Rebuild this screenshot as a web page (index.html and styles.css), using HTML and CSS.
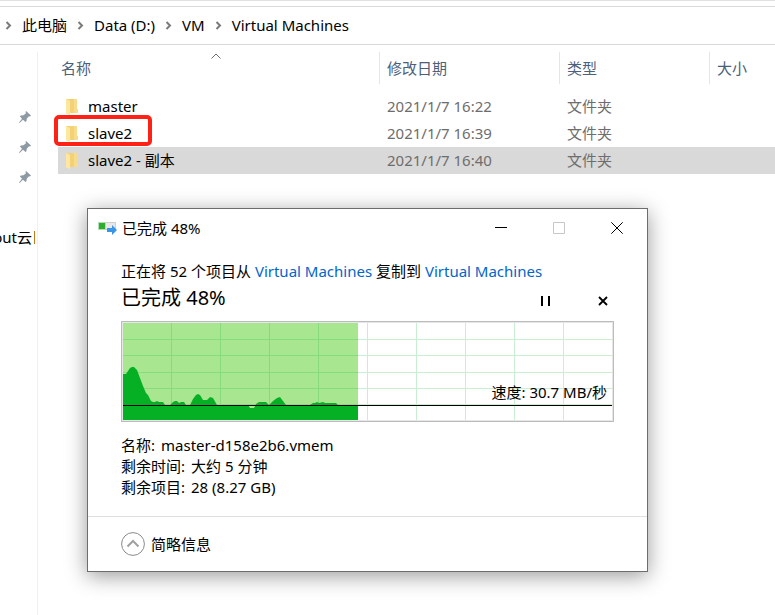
FILE: index.html
```html
<!DOCTYPE html>
<html lang="zh-CN">
<head>
<meta charset="utf-8">
<title>Virtual Machines</title>
<link rel="stylesheet" href="styles.css">
</head>
<body>
<div class="explorer">
  <div class="toolbar-edge"></div>
  <nav class="address">
    <svg class="chev" viewBox="0 0 7 9"><path d="M1.5 1 5 4.5 1.5 8"/></svg>
    <a href="#">此电脑</a>
    <svg class="chev" viewBox="0 0 7 9"><path d="M1.5 1 5 4.5 1.5 8"/></svg>
    <a href="#">Data (D:)</a>
    <svg class="chev" viewBox="0 0 7 9"><path d="M1.5 1 5 4.5 1.5 8"/></svg>
    <a href="#">VM</a>
    <svg class="chev" viewBox="0 0 7 9"><path d="M1.5 1 5 4.5 1.5 8"/></svg>
    <a href="#">Virtual Machines</a>
  </nav>
  <div class="content">
    <aside class="sidebar">
      <svg class="pin" viewBox="0 0 14 14"><path d="M8 1 13 5.500 12 6.500 11 6.300 8.700 8.700 8.500 11 7.500 12 5 9.700 1.500 13 1 12.500 4 8.700 1.800 6.300 3 5.500 5.500 5.300 8 3.300 7.500 2Z"/></svg>
      <svg class="pin" viewBox="0 0 14 14"><path d="M8 1 13 5.500 12 6.500 11 6.300 8.700 8.700 8.500 11 7.500 12 5 9.700 1.500 13 1 12.500 4 8.700 1.800 6.300 3 5.500 5.500 5.300 8 3.300 7.500 2Z"/></svg>
      <svg class="pin" viewBox="0 0 14 14"><path d="M8 1 13 5.500 12 6.500 11 6.300 8.700 8.700 8.500 11 7.500 12 5 9.700 1.500 13 1 12.500 4 8.700 1.800 6.300 3 5.500 5.500 5.300 8 3.300 7.500 2Z"/></svg>
      <div class="tree-item"><span>out云</span><i class="cut"></i></div>
    </aside>
    <main class="files">
      <table>
        <colgroup><col class="c-name"><col class="c-date"><col class="c-type"><col></colgroup>
        <thead>
          <tr>
            <th>名称<svg class="sort" viewBox="0 0 10 6"><path d="M.5 5.500 5 1 9.500 5.500"/></svg></th>
            <th>修改日期</th><th>类型</th><th>大小</th>
          </tr>
        </thead>
        <tbody>
          <tr>
            <td><div class="name"><svg class="folder" viewBox="0 0 14 18"><path d="M1 1H12V11H13V15H1Z" fill="#f3d277"/><path d="M9 1H12V11H13V15H9Z" fill="#f8dc8b"/><path d="M1 1 5 3V17L1 15.500Z" fill="#ffe7a2"/></svg>master</div></td>
            <td>2021/1/7 16:22</td><td>文件夹</td><td></td>
          </tr>
          <tr>
            <td class="marked"><div class="name"><svg class="folder" viewBox="0 0 14 18"><path d="M1 1H12V11H13V15H1Z" fill="#f3d277"/><path d="M9 1H12V11H13V15H9Z" fill="#f8dc8b"/><path d="M1 1 5 3V17L1 15.500Z" fill="#ffe7a2"/></svg>slave2</div></td>
            <td>2021/1/7 16:39</td><td>文件夹</td><td></td>
          </tr>
          <tr class="selected">
            <td><div class="name"><svg class="folder" viewBox="0 0 14 18"><path d="M1 1H12V11H13V15H1Z" fill="#f3d277"/><path d="M9 1H12V11H13V15H9Z" fill="#f8dc8b"/><path d="M1 1 5 3V17L1 15.500Z" fill="#ffe7a2"/></svg>slave2 - 副本</div></td>
            <td>2021/1/7 16:40</td><td>文件夹</td><td></td>
          </tr>
        </tbody>
      </table>
    </main>
  </div>
</div>

<section class="dialog" role="dialog" aria-labelledby="dlg-title">
  <header class="titlebar">
    <svg class="copy-icon" viewBox="0 0 19 14"><path d="M0 1H18V9H0Z" fill="#cfcfcf"/><path d="M1 2H17V8H1Z" fill="#e8e8e8"/><path d="M0 1H8V9H0Z" fill="#b5dcb5"/><path d="M1 2H7V8H1Z" fill="#2cae2c"/><path d="M9 7H14V4L19 9 14 14V11H9Z" fill="#3a96e4"/></svg>
    <h1 id="dlg-title">已完成 48%</h1>
    <div class="win-buttons">
      <button type="button" aria-label="最小化"><svg viewBox="0 0 12 12"><path d="M0 5.500H12" stroke="#000"/></svg></button>
      <button type="button" aria-label="最大化" disabled><svg viewBox="0 0 12 12"><path d="M.5 .5H11.500V11.500H.5Z" stroke="#c6c6c6"/></svg></button>
      <button type="button" aria-label="关闭"><svg viewBox="0 0 12 12"><path d="M.3 .3 11.700 11.700M11.700 .3 .3 11.700" stroke="#000"/></svg></button>
    </div>
  </header>
  <div class="body">
    <p class="route">正在将 52 个项目从 <a href="#">Virtual Machines</a> 复制到 <a href="#">Virtual Machines</a></p>
    <div class="status">
      <h2>已完成 48%</h2>
      <div class="actions">
        <button type="button" aria-label="暂停"><svg viewBox="0 0 10 10"><path d="M2 0V10M9 0V10" stroke="#000" stroke-width="2"/></svg></button>
        <button type="button" aria-label="取消"><svg viewBox="0 0 10 10"><path d="M1 1 9 9M9 1 1 9" stroke="#000" stroke-width="1.800"/></svg></button>
      </div>
    </div>
    <div class="chart">
      <svg class="plot" viewBox="0 0 489 97" preserveAspectRatio="none">
        <path d="M0 0H235V97H0Z" fill="#a8e690"/>
        <path d="M244.500 0V97M293.500 0V97M342.500 0V97M391.500 0V97M440.500 0V97M235 16.500H489M235 32.500H489M235 49.500H489M235 65.500H489M235 81.500H489" stroke="#c9efd2"/>
        <path d="M48.500 0V97M97.500 0V97M146.500 0V97M195.500 0V97M0 16.500H235M0 32.500H235M0 49.500H235M0 65.500H235M0 81.500H235" stroke="#88db7c"/>
        <path d="M0 51H3L5 48 7 45 9 44H11L14 47 17 55 20 63 23 70 25 72 28 78 30 79H32L34 78 36 79H40L42 82H47L50 79 52 78H54L56 80 58 79H61L63 82H67L70 76 73 72 75 71 77 72 80 77H84L87 74 90 75 94 82H125L127 85H131L133 81 136 79H143L146 82 150 78 154 75 157 74 160 78 163 82H187L190 80 192 80 194 79 196 80 200 79 202 80H213L215 82H235V97H0Z" fill="#06b025"/>
        <path d="M0 82.500H489" stroke="#000"/>
      </svg>
      <span class="speed">速度: 30.7 MB/秒</span>
    </div>
    <dl class="details">
      <div><dt>名称:</dt><dd>master-d158e2b6.vmem</dd></div>
      <div><dt>剩余时间:</dt><dd>大约 5 分钟</dd></div>
      <div><dt>剩余项目:</dt><dd>28 (8.27 GB)</dd></div>
    </dl>
  </div>
  <footer class="footer">
    <button type="button" class="less"><svg viewBox="0 0 24 24"><circle cx="12" cy="12" r="11.400" stroke="#8a8a8a"/><path d="M6.500 14.500 12 9 17.500 14.500" stroke="#a0a0a0" stroke-width="2"/></svg>简略信息</button>
  </footer>
</section>
</body>
</html>
```
FILE: styles.css
```css
*,
*::before,
*::after {
  box-sizing: border-box;
}

body {
  margin: 0;
  background: #fff;
  color: #000;
  font: 15px/21px "Noto Sans", "Noto Sans CJK SC", sans-serif;
  overflow: hidden;
}

svg {
  display: block;
  fill: none;
}

h1, h2, p, dl, dd {
  margin: 0;
  font-weight: 400;
}

a {
  color: inherit;
  text-decoration: none;
}

button {
  display: flex;
  align-items: center;
  justify-content: center;
  padding: 0;
  border: 0;
  background: none;
  color: inherit;
  font: inherit;
}

/* explorer window */
.explorer {
  display: flex;
  flex-direction: column;
  min-height: 100vh;
}

.toolbar-edge {
  height: 7px;
  border-top: 1px solid #e0e0e0;
  border-bottom: 1px solid #d9d9d9;
}

.address {
  display: flex;
  align-items: center;
  gap: 10px;
  height: 38px;
  padding-left: 5px;
  border-bottom: 1px solid #d9d9d9;
  white-space: nowrap;
}

.chev {
  width: 7px;
  height: 9px;
  stroke: #7a7a7a;
  stroke-width: 2;
}

.content {
  display: flex;
  flex: 1;
  padding-top: 7px;
}

.sidebar {
  width: 38px;
  padding-top: 58px;
  border-right: 1px solid #f0f0f0;
  overflow: hidden;
}

.pin {
  width: 14px;
  height: 14px;
  margin: 0 0 16px 18px;
  fill: #8d99a3;
}

.tree-item {
  display: flex;
  align-items: center;
  justify-content: flex-end;
  gap: 2px;
  margin-top: 43px;
  padding-right: 2px;
  white-space: nowrap;
}

.cut {
  flex: none;
  width: 1px;
  height: 13px;
  background: #c47a1c;
}

.files {
  flex: 1;
  min-width: 0;
  padding-left: 20px;
}

table {
  width: 100%;
  table-layout: fixed;
  border-collapse: separate;
  border-spacing: 0;
}

.c-name {
  width: 321px;
}

.c-date {
  width: 180px;
}

.c-type {
  width: 150px;
}

th, td {
  padding: 0 0 0 8px;
  text-align: left;
  white-space: nowrap;
  color: #6d6d6d;
}

th {
  position: relative;
  height: 32px;
  color: #4c607a;
  font-weight: 400;
}

th + th {
  padding-left: 7px;
  border-left: 1px solid #e5e5e5;
}

th:first-child {
  padding-left: 3px;
}

.sort {
  position: absolute;
  top: 1px;
  right: 158px;
  width: 10px;
  height: 6px;
  stroke: #6d6d6d;
}

tbody::before {
  content: "";
  display: block;
  height: 9px;
}

td {
  position: relative;
  height: 27px;
}

.selected td {
  background: #d9d9d9;
}

.name {
  display: flex;
  align-items: center;
  gap: 9px;
  color: #000;
}

td:first-child {
  padding-left: 7px;
}

.folder {
  width: 14px;
  height: 18px;
}

.marked::after {
  content: "";
  position: absolute;
  z-index: 1;
  top: -5px;
  left: -4px;
  width: 98px;
  height: 31px;
  border: 4px solid #fe2116;
  border-radius: 5px;
}

/* copy progress window */
.dialog {
  position: absolute;
  top: 208px;
  left: 87px;
  width: 561px;
  border: 1px solid #6d6d6d;
  background: #fff;
  box-shadow: 0 4px 20px rgba(0, 0, 0, .4);
}

.titlebar {
  display: flex;
  align-items: center;
  height: 38px;
  padding: 0 1px 0 10px;
}

.copy-icon {
  width: 19px;
  height: 14px;
}

h1 {
  margin-left: 5px;
  font-size: 15px;
}

.win-buttons {
  display: flex;
  margin-left: auto;
}

.win-buttons button {
  width: 58px;
  height: 36px;
}

.win-buttons svg {
  width: 12px;
  height: 12px;
}

.body {
  padding: 14px 33px 18px;
}

.route a {
  color: #0066cc;
}

.status {
  display: flex;
  align-items: center;
  justify-content: space-between;
  height: 28px;
  margin-top: 2px;
}

h2 {
  font-size: 20px;
  line-height: 28px;
}

.actions {
  display: flex;
  gap: 36px;
  padding-top: 6px;
}

.actions button {
  width: 22px;
  height: 22px;
}

.actions svg {
  width: 10px;
  height: 10px;
}

.chart {
  position: relative;
  height: 101px;
  margin-top: 9px;
  border: 1px solid #bcbcbc;
  outline: 1px solid #e6e6e6;
  outline-offset: -2px;
  padding: 1px;
}

.plot {
  width: 100%;
  height: 97px;
}

.speed {
  position: absolute;
  right: 6px;
  bottom: 18px;
}

.details {
  margin-top: 13px;
}

.details div {
  display: flex;
  gap: 6px;
}

.footer {
  display: flex;
  align-items: center;
  height: 55px;
  padding-left: 33px;
  border-top: 1px solid #dfdfdf;
}

.less {
  gap: 6px;
}

.less svg {
  width: 24px;
  height: 24px;
}
```
